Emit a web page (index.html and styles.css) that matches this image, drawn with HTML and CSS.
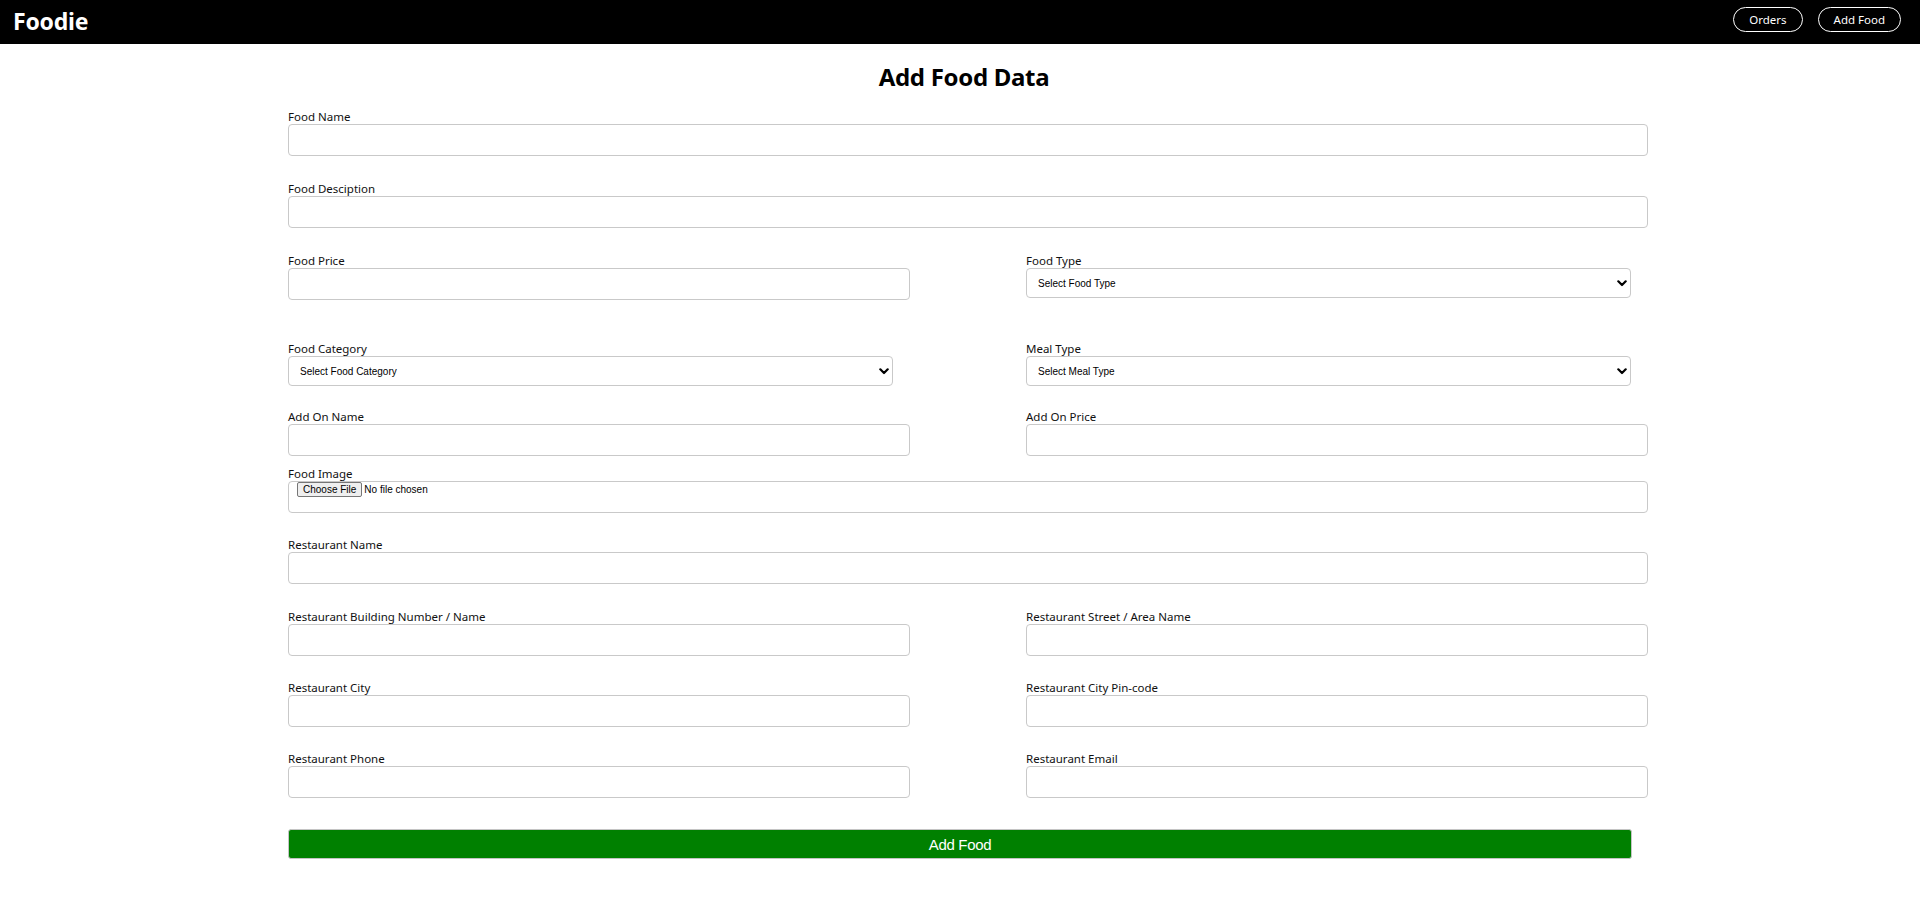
FILE: index.html
```html
<!DOCTYPE html>
<html lang="en">
<head>
<meta charset="utf-8">
<title>Foodie - Add Food</title>
<link rel="stylesheet" href="styles.css">
</head>
<body>
<header class="navbar">
  <div class="brand">Foodie</div>
  <nav class="nav-actions">
    <button class="pill" type="button">Orders</button>
    <button class="pill" type="button">Add Food</button>
  </nav>
</header>
<main class="page">
  <h1 class="title">Add Food Data</h1>
  <form class="food-form">
    <div class="field gap-25">
      <label class="label">Food Name</label>
      <input class="input" type="text">
    </div>
    <div class="field gap-25">
      <label class="label">Food Desciption</label>
      <input class="input" type="text">
    </div>
    <div class="row gap-41">
      <div class="field">
        <label class="label">Food Price</label>
        <input class="input" type="text">
      </div>
      <div class="field">
        <label class="label">Food Type</label>
        <div class="select-wrap">
          <select class="select"><option>Select Food Type</option></select>
          <svg class="chevron" width="10" height="7" viewBox="0 0 10 7"><path d="M1.3 1.3 L5 5 L8.7 1.3" fill="none" stroke="#000" stroke-width="2.2" stroke-linecap="round" stroke-linejoin="round"/></svg>
        </div>
      </div>
    </div>
    <div class="row gap-23">
      <div class="field">
        <label class="label">Food Category</label>
        <div class="select-wrap">
          <select class="select"><option>Select Food Category</option></select>
          <svg class="chevron" width="10" height="7" viewBox="0 0 10 7"><path d="M1.3 1.3 L5 5 L8.7 1.3" fill="none" stroke="#000" stroke-width="2.2" stroke-linecap="round" stroke-linejoin="round"/></svg>
        </div>
      </div>
      <div class="field">
        <label class="label">Meal Type</label>
        <div class="select-wrap">
          <select class="select"><option>Select Meal Type</option></select>
          <svg class="chevron" width="10" height="7" viewBox="0 0 10 7"><path d="M1.3 1.3 L5 5 L8.7 1.3" fill="none" stroke="#000" stroke-width="2.2" stroke-linecap="round" stroke-linejoin="round"/></svg>
        </div>
      </div>
    </div>
    <div class="row gap-10">
      <div class="field">
        <label class="label">Add On Name</label>
        <input class="input" type="text">
      </div>
      <div class="field">
        <label class="label">Add On Price</label>
        <input class="input" type="text">
      </div>
    </div>
    <div class="field gap-24">
      <label class="label">Food Image</label>
      <div class="file-box">
        <span class="file-btn">Choose File</span><span class="file-text">No file chosen</span>
      </div>
    </div>
    <div class="field gap-25">
      <label class="label">Restaurant Name</label>
      <input class="input" type="text">
    </div>
    <div class="row gap-24">
      <div class="field">
        <label class="label">Restaurant Building Number / Name</label>
        <input class="input" type="text">
      </div>
      <div class="field">
        <label class="label">Restaurant Street / Area Name</label>
        <input class="input" type="text">
      </div>
    </div>
    <div class="row gap-24">
      <div class="field">
        <label class="label">Restaurant City</label>
        <input class="input" type="text">
      </div>
      <div class="field">
        <label class="label">Restaurant City Pin-code</label>
        <input class="input" type="text">
      </div>
    </div>
    <div class="row gap-31">
      <div class="field">
        <label class="label">Restaurant Phone</label>
        <input class="input" type="text">
      </div>
      <div class="field">
        <label class="label">Restaurant Email</label>
        <input class="input" type="text">
      </div>
    </div>
    <button class="submit" type="button">Add Food</button>
  </form>
</main>
</body>
</html>
```
FILE: styles.css
```css
* { box-sizing: border-box; }

html, body {
  margin: 0;
  padding: 0;
  background: #fff;
  font-family: "Noto Sans", "Open Sans", sans-serif;
  color: #000;
}

.navbar {
  height: 44px;
  background: #000;
  display: flex;
  justify-content: space-between;
  align-items: flex-start;
  padding: 0 19px 0 13px;
}

.brand {
  color: #fff;
  font-weight: 700;
  font-size: 23px;
  line-height: 42px;
  letter-spacing: -0.2px;
}

.nav-actions {
  display: flex;
  gap: 15px;
  margin-top: 7px;
}

.pill {
  height: 25px;
  padding: 0 15px;
  border: 1px solid #fff;
  border-radius: 13px;
  background: #000;
  color: #fff;
  font-family: "Noto Sans", sans-serif;
  font-size: 11.5px;
  line-height: 23px;
  cursor: pointer;
}

.page {
  width: 1376px;
  margin: 0 auto;
  padding-left: 16px;
}

.title {
  margin: 17px 0 16px -8px;
  font-size: 24px;
  line-height: 32px;
  font-weight: 700;
  text-align: center;
  letter-spacing: -0.3px;
}

.food-form {
  display: block;
}

.row {
  display: grid;
  grid-template-columns: 622px 622px;
  justify-content: space-between;
}

.field { display: block; }

.gap-10 { margin-bottom: 10px; }
.gap-23 { margin-bottom: 23px; }
.gap-24 { margin-bottom: 24px; }
.gap-25 { margin-bottom: 25px; }
.gap-31 { margin-bottom: 31px; }
.gap-41 { margin-bottom: 41px; }

.label {
  display: block;
  font-size: 11.5px;
  line-height: 15px;
  height: 15px;
  white-space: nowrap;
  color: #111;
}

.input {
  display: block;
  width: 100%;
  height: 32px;
  margin: 0;
  border: 1px solid #c9c9c9;
  border-radius: 4px;
  background: #fff;
  padding: 0 10px;
  font-size: 13px;
  outline: none;
}

.select-wrap {
  position: relative;
  width: calc(100% - 17px);
}

.select {
  display: block;
  width: 100%;
  height: 30px;
  margin: 0;
  appearance: none;
  -webkit-appearance: none;
  border: 1px solid #c9c9c9;
  border-radius: 4px;
  background: #fff;
  padding: 0 24px 0 11px;
  font-family: "Liberation Sans", Arial, sans-serif;
  font-size: 10px;
  color: #000;
}

.chevron {
  position: absolute;
  right: 4px;
  top: 12px;
  pointer-events: none;
}

.file-box {
  display: flex;
  align-items: flex-start;
  height: 32px;
  border: 1px solid #c9c9c9;
  border-radius: 4px;
  padding: 0 0 0 8px;
  font-family: "Liberation Sans", Arial, sans-serif;
  font-size: 10px;
}

.file-btn {
  display: inline-block;
  height: 15px;
  line-height: 13px;
  padding: 0 5px;
  border: 1px solid #767676;
  border-radius: 2px;
  background: #efefef;
  color: #000;
}

.file-text {
  margin-left: 2px;
  line-height: 15px;
}

.submit {
  display: block;
  width: calc(100% - 16px);
  height: 30px;
  margin: 0;
  background: #008000;
  color: #fff;
  border: 1px solid #c4c4c4;
  border-radius: 3px;
  font-family: "Liberation Sans", Arial, sans-serif;
  font-size: 15px;
  letter-spacing: -0.3px;
  cursor: pointer;
}
```
